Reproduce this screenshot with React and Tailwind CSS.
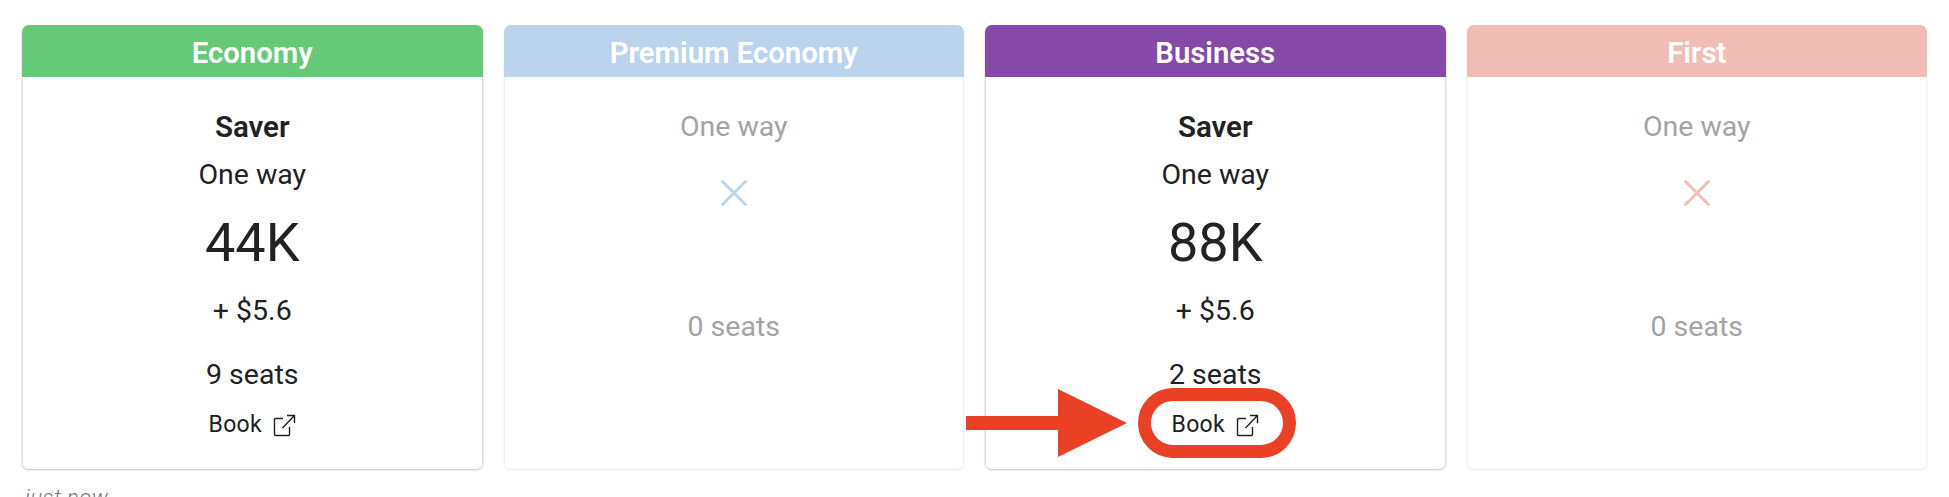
import React from "react";
import { X } from "lucide-react";

const BookIcon = () => (
  <svg width="23" height="23" viewBox="0 0 23 23" fill="none" stroke="currentColor" strokeWidth="1.4" className="ml-[11px]">
    <path d="M10 4.5H2.5a1 1 0 0 0-1 1v15a1 1 0 0 0 1 1h13a1 1 0 0 0 1-1V13" />
    <path d="M9.5 14L21 2M14 1.5h7.5V9" />
  </svg>
);

const Book = () => (
  <div className="flex items-center justify-center text-[23px] leading-[48px] tracking-[0.3px] text-[#222]">
    Book
    <BookIcon />
  </div>
);

const Available = ({ points, seats, extra }) => (
  <div className="flex flex-col items-center pt-[26px] text-[28.5px] leading-[48px] text-[#222]">
    <div className="text-[29.5px] font-semibold">Saver</div>
    <div>One way</div>
    <div className="mt-[11px] text-[54px] leading-[66px]">{points}</div>
    <div className="mt-[11px]">{extra}</div>
    <div className="mt-[16px]">{seats}</div>
    <div className="mt-[2px]">{extra && <Book />}</div>
  </div>
);

const Unavailable = ({ tint }) => (
  <div className="flex flex-col items-center pt-[26px] text-[28.5px] leading-[48px] text-[#a3a3a3]">
    <div>One way</div>
    <X size={46} strokeWidth={1.5} color={tint} className="mt-[19px]" />
    <div className="mt-[87px]">0 seats</div>
  </div>
);

const Card = ({ title, color, faded, children }) => (
  <div
    className={`h-[444px] overflow-hidden rounded-[7px] bg-white ${
      faded ? "shadow-[0_1px_2px_rgba(0,0,0,0.1)]" : "shadow-[0_1px_2px_rgba(0,0,0,0.25)]"
    }`}
  >
    <div className={`h-[52px] text-center text-[29.3px] leading-[56px] font-semibold text-white ${color}`}>{title}</div>
    <div className={`h-[392px] border-x ${faded ? "border-[#f1f1f1]" : "border-[#ddd]"}`}>{children}</div>
  </div>
);

export default function App() {
  return (
    <div className="relative h-[497px] w-[1949px] overflow-hidden bg-white pt-[25px] pl-[22px] pr-[22px] font-['Roboto',sans-serif]">
      <div className="grid grid-cols-4 gap-[21px]">
        <Card title="Economy" color="bg-[#66c978]">
          <Available points="44K" extra="+ $5.6" seats="9 seats" />
        </Card>
        <Card title="Premium Economy" color="bg-[#b9d4ec]" faded>
          <Unavailable tint="#b9d4ec" />
        </Card>
        <Card title="Business" color="bg-[#8549a7]">
          <Available points="88K" extra="+ $5.6" seats="2 seats" />
        </Card>
        <Card title="First" color="bg-[#f0bcb4]" faded>
          <Unavailable tint="#f0bcb4" />
        </Card>
      </div>
      <div className="mt-[16px] pl-[3px] text-[22px] leading-[26px] tracking-[0.5px] font-light text-[#777] italic">just now</div>

      {/* annotation over the Business book button */}
      <div className="absolute top-[388px] left-[1138px] h-[70px] w-[158px] rounded-full border-[13px] border-[#ea4125]" />
      <svg className="absolute top-[388px] left-[965px]" width="164" height="70" viewBox="0 0 164 70">
        <path d="M1 28H93V1L162 35L93 69V42H1Z" fill="#ea4125" />
      </svg>
    </div>
  );
}
